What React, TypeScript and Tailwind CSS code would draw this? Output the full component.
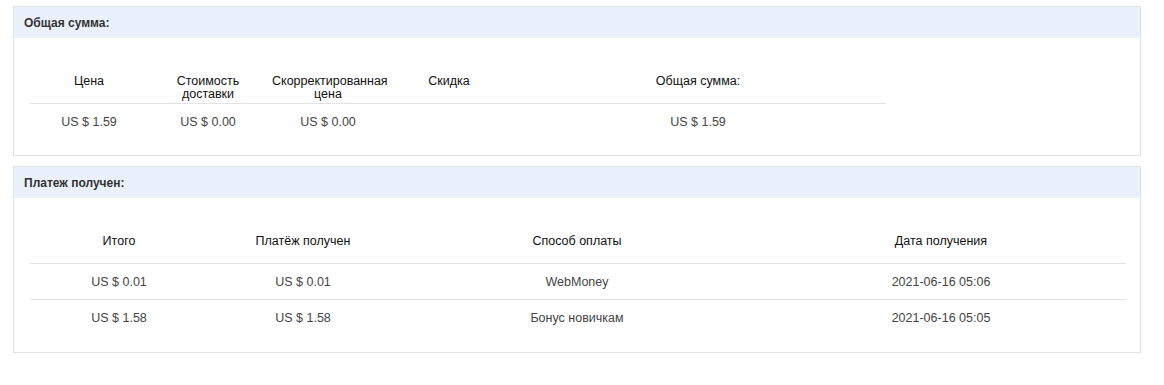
import React from 'react';

const font = { fontFamily: '"Liberation Sans", Arial, sans-serif' };

const totals = {
  widths: ['w-[118px]', 'w-[120px]', 'w-[120px]', 'w-[122px]', 'flex-1'],
  head: ['Цена', 'Стоимость доставки', 'Скорректированная цена', 'Скидка', 'Общая сумма:'],
  rows: [['US $ 1.59', 'US $ 0.00', 'US $ 0.00', '', 'US $ 1.59']],
};

const payments = {
  widths: ['w-[178px]', 'w-[190px]', 'w-[358px]', 'flex-1'],
  head: ['Итого', 'Платёж получен', 'Способ оплаты', 'Дата получения'],
  rows: [
    ['US $ 0.01', 'US $ 0.01', 'WebMoney', '2021-06-16 05:06'],
    ['US $ 1.58', 'US $ 1.58', 'Бонус новичкам', '2021-06-16 05:05'],
  ],
};

const Panel = ({ title, children, bodyClass }: { title: string; children: React.ReactNode; bodyClass: string }) => (
  <div className="w-[1128px] border border-[#dfe3e8] bg-white">
    <div className="h-[31px] bg-[#ebf1fc] pl-[10px] flex items-center text-[12px] font-bold text-[#333]">
      {title}
    </div>
    <div className={bodyClass}>{children}</div>
  </div>
);

const Table = ({ data, width }: { data: typeof payments; width: string }) => (
  <div className={`${width} text-[12.5px]`}>
    <div className="flex h-[28px] items-start text-[#111] leading-[13px]">
      {data.head.map((h, i) => (
        <div key={i} className={`${data.widths[i]} text-center px-1`}>
          {h}
        </div>
      ))}
    </div>
    {data.rows.map((row, r) => (
      <div key={r} className="flex h-[36px] items-center pt-[1px] border-t border-[#e3e3e3] text-[#444]">
        {row.map((c, i) => (
          <div key={i} className={`${data.widths[i]} text-center`}>
            {c}
          </div>
        ))}
      </div>
    ))}
  </div>
);

export default function App() {
  return (
    <div className="min-h-[385px] bg-white pt-[6px] pl-[13px] flex flex-col gap-[10px]" style={font}>
      <Panel title="Общая сумма:" bodyClass="pt-[37px] pb-[16px] pl-[16px]">
        <Table data={totals} width="w-[856px]" />
      </Panel>
      <Panel title="Платеж получен:" bodyClass="pt-[37px] pb-[17px] pl-[16px]">
        <Table data={payments} width="w-[1096px]" />
      </Panel>
    </div>
  );
}
